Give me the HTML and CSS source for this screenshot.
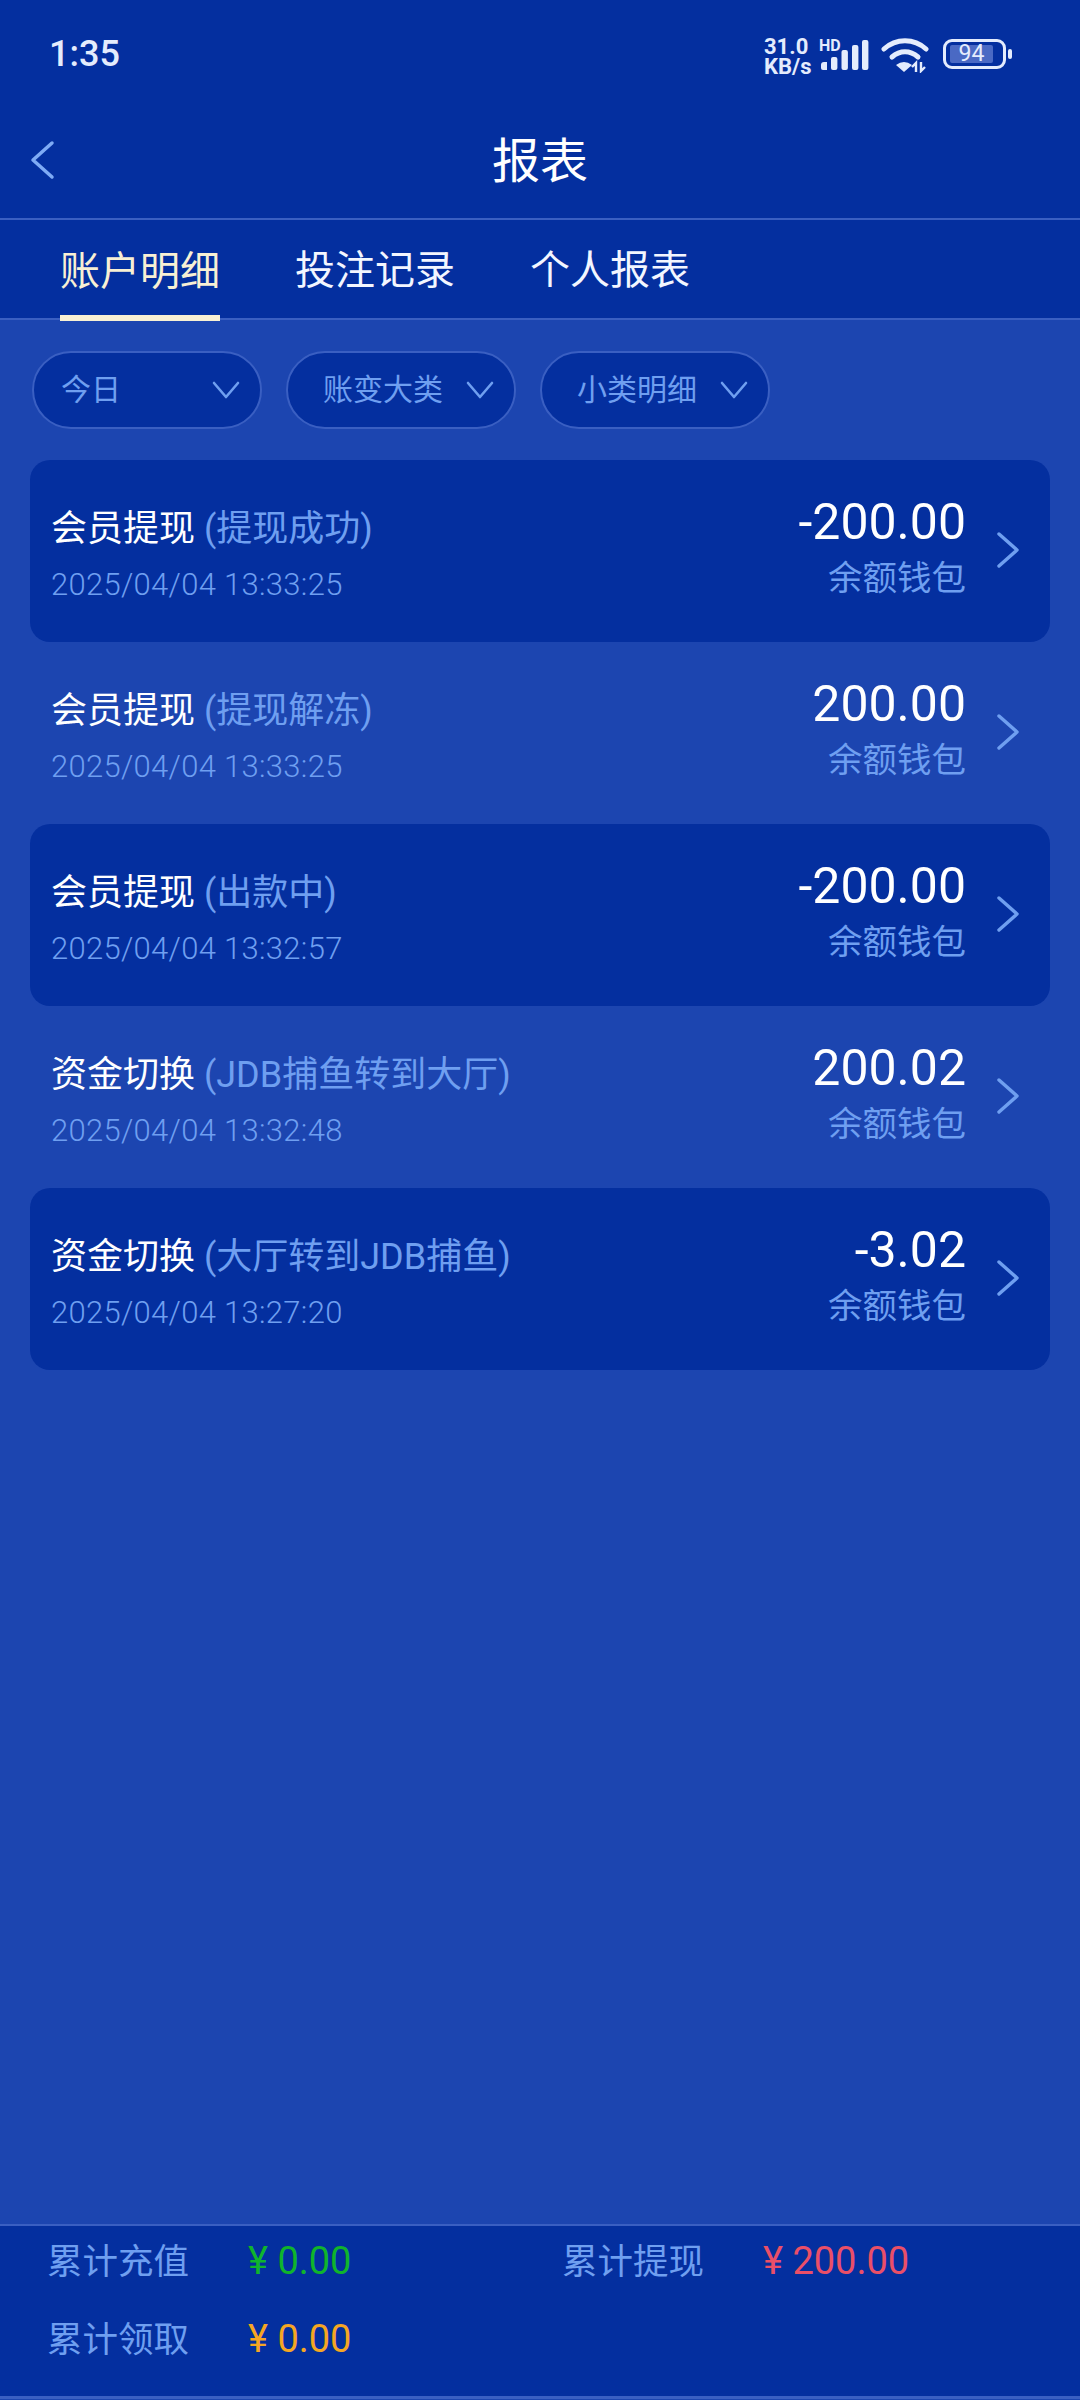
FILE: index.html
```html
<!DOCTYPE html>
<html lang="zh-CN">
<head>
    <meta charset="UTF-8" />
    <meta name="viewport" content="width=device-width, initial-scale=1.0"/>
    <title>报表</title>
    <link rel="stylesheet" href="styles.css">
</head>
<body>

<div class="page">

    <!-- Barra di stato -->
    <div class="status-bar">
        <span class="status-time">1:35</span>
        <div class="status-icons">
            <div class="net-speed"><span>31.0</span><span>KB/s</span></div>
            <div class="signal">
                <span class="hd-text">HD</span>
                <svg width="50" height="34" viewBox="0 0 50 34">
                    <path d="M2 27a3 3 0 0 1 3-3h3v8H4a2 2 0 0 1-2-2z" fill="#e4ecfd"/>
                    <rect x="12" y="19" width="6.4" height="13" rx="2" fill="#e4ecfd"/>
                    <rect x="22.5" y="12" width="6.4" height="20" rx="2" fill="#e4ecfd"/>
                    <rect x="33" y="7" width="6.4" height="25" rx="2" fill="#e4ecfd"/>
                    <rect x="43" y="2" width="6.4" height="30" rx="2" fill="#e4ecfd"/>
                </svg>
            </div>
            <svg class="wifi" width="48" height="36" viewBox="0 0 48 36">
                <path d="M3 12C15 1 33 1 45 12" fill="none" stroke="#e4ecfd" stroke-width="5" stroke-linecap="round"/>
                <path d="M11 20c8-7 18-7 26 0" fill="none" stroke="#e4ecfd" stroke-width="5" stroke-linecap="round"/>
                <path d="M15 28q8-6 16 0l-8 7z" fill="#e4ecfd"/>
                <path d="M35 35v-9l-4 4M40 25v9l4-4" fill="none" stroke="#e4ecfd" stroke-width="2.4"/>
            </svg>
            <div class="battery">
                <div class="battery-body"><span class="battery-level">94</span></div>
                <div class="battery-nub"></div>
            </div>
        </div>
    </div>

    <!-- Intestazione -->
    <div class="nav-bar">
        <svg class="back" width="26" height="40" viewBox="0 0 26 40">
            <path d="M23 3L4 20l19 17" fill="none" stroke="#7fabf5" stroke-width="3.5" stroke-linecap="round" stroke-linejoin="round"/>
        </svg>
        <h1>报表</h1>
    </div>

    <div class="tabs">
        <a class="tab tab-active">账户明细</a>
        <a class="tab">投注记录</a>
        <a class="tab">个人报表</a>
    </div>

    <!-- Filtri -->
    <div class="filters">
        <div class="chip chip-short">
            <span>今日</span>
            <svg width="28" height="18" viewBox="0 0 28 18"><path d="M2 2l12 14L26 2" fill="none" stroke="#6f9ff0" stroke-width="2.6" stroke-linecap="round" stroke-linejoin="round"/></svg>
        </div>
        <div class="chip">
            <span>账变大类</span>
            <svg width="28" height="18" viewBox="0 0 28 18"><path d="M2 2l12 14L26 2" fill="none" stroke="#6f9ff0" stroke-width="2.6" stroke-linecap="round" stroke-linejoin="round"/></svg>
        </div>
        <div class="chip">
            <span>小类明细</span>
            <svg width="28" height="18" viewBox="0 0 28 18"><path d="M2 2l12 14L26 2" fill="none" stroke="#6f9ff0" stroke-width="2.6" stroke-linecap="round" stroke-linejoin="round"/></svg>
        </div>
    </div>

    <!-- Elenco movimenti -->
    <div class="records">
        <div class="record record-dark">
            <div class="record-left">
                <div class="record-title">会员提现 <span>(提现成功)</span></div>
                <div class="record-date">2025/04/04 13:33:25</div>
            </div>
            <div class="record-right">
                <div class="record-amount">-200.00</div>
                <div class="record-wallet">余额钱包</div>
            </div>
            <svg class="record-arrow" width="24" height="38" viewBox="0 0 24 38"><path d="M3 3l18 16L3 35" fill="none" stroke="#6f9ff0" stroke-width="3.4" stroke-linecap="round" stroke-linejoin="round"/></svg>
        </div>
        <div class="record">
            <div class="record-left">
                <div class="record-title">会员提现 <span>(提现解冻)</span></div>
                <div class="record-date">2025/04/04 13:33:25</div>
            </div>
            <div class="record-right">
                <div class="record-amount">200.00</div>
                <div class="record-wallet">余额钱包</div>
            </div>
            <svg class="record-arrow" width="24" height="38" viewBox="0 0 24 38"><path d="M3 3l18 16L3 35" fill="none" stroke="#6f9ff0" stroke-width="3.4" stroke-linecap="round" stroke-linejoin="round"/></svg>
        </div>
        <div class="record record-dark">
            <div class="record-left">
                <div class="record-title">会员提现 <span>(出款中)</span></div>
                <div class="record-date">2025/04/04 13:32:57</div>
            </div>
            <div class="record-right">
                <div class="record-amount">-200.00</div>
                <div class="record-wallet">余额钱包</div>
            </div>
            <svg class="record-arrow" width="24" height="38" viewBox="0 0 24 38"><path d="M3 3l18 16L3 35" fill="none" stroke="#6f9ff0" stroke-width="3.4" stroke-linecap="round" stroke-linejoin="round"/></svg>
        </div>
        <div class="record">
            <div class="record-left">
                <div class="record-title">资金切换 <span>(JDB捕鱼转到大厅)</span></div>
                <div class="record-date">2025/04/04 13:32:48</div>
            </div>
            <div class="record-right">
                <div class="record-amount">200.02</div>
                <div class="record-wallet">余额钱包</div>
            </div>
            <svg class="record-arrow" width="24" height="38" viewBox="0 0 24 38"><path d="M3 3l18 16L3 35" fill="none" stroke="#6f9ff0" stroke-width="3.4" stroke-linecap="round" stroke-linejoin="round"/></svg>
        </div>
        <div class="record record-dark">
            <div class="record-left">
                <div class="record-title">资金切换 <span>(大厅转到JDB捕鱼)</span></div>
                <div class="record-date">2025/04/04 13:27:20</div>
            </div>
            <div class="record-right">
                <div class="record-amount">-3.02</div>
                <div class="record-wallet">余额钱包</div>
            </div>
            <svg class="record-arrow" width="24" height="38" viewBox="0 0 24 38"><path d="M3 3l18 16L3 35" fill="none" stroke="#6f9ff0" stroke-width="3.4" stroke-linecap="round" stroke-linejoin="round"/></svg>
        </div>
    </div>

    <!-- Totali -->
    <div class="summary">
        <div class="summary-item"><span class="summary-label">累计充值</span><span class="summary-value value-green">¥ 0.00</span></div>
        <div class="summary-item"><span class="summary-label">累计提现</span><span class="summary-value value-red">¥ 200.00</span></div>
        <div class="summary-item"><span class="summary-label">累计领取</span><span class="summary-value value-orange">¥ 0.00</span></div>
    </div>

</div>

</body>
</html>
```
FILE: styles.css
```css
body {
    margin: 0;
    padding: 0;
    background: #1c45b0;
    font-family: Roboto, 'Noto Sans CJK SC', sans-serif;
    color: #fff;
}

.page {
    width: 1080px;
    height: 2400px;
    display: flex;
    flex-direction: column;
    overflow: hidden;
}

/* status bar */
.status-bar {
    height: 100px;
    background: #042f9f;
    display: flex;
    justify-content: space-between;
    align-items: flex-start;
    box-sizing: border-box;
    padding: 32px 68px 0 49px;
}

.status-time {
    font-size: 36px;
    line-height: 44px;
    font-weight: 500;
    color: #e4ecfd;
}

.status-icons {
    display: flex;
    align-items: flex-start;
    padding-top: 5px;
}

.net-speed {
    display: flex;
    flex-direction: column;
    font-size: 22px;
    line-height: 20px;
    font-weight: 700;
    color: #e4ecfd;
    width: 55px;
    white-space: nowrap;
}

.signal {
    position: relative;
    margin-top: 1px;
    height: 34px;
}

.hd-text {
    position: absolute;
    left: 0;
    top: 2px;
    font-size: 16px;
    line-height: 12px;
    font-weight: 700;
    color: #e4ecfd;
}

.wifi {
    margin-left: 12px;
}

.battery {
    display: flex;
    align-items: center;
    margin-left: 14px;
    margin-top: 2px;
}

.battery-body {
    width: 63px;
    height: 30px;
    box-sizing: border-box;
    border: 3px solid #e4ecfd;
    border-radius: 9px;
    padding: 3px 10px 3px 4px;
    display: flex;
}

.battery-level {
    flex: 1;
    background: #4a69c4;
    border-radius: 2px;
    font-size: 23px;
    line-height: 18px;
    text-align: center;
    color: #e4ecfd;
}

.battery-nub {
    width: 4px;
    height: 10px;
    margin-left: 2px;
    border-radius: 2px;
    background: #e4ecfd;
}

/* nav */
.nav-bar {
    height: 118px;
    background: #042f9f;
    border-bottom: 2px solid #3a5fc2;
    box-sizing: content-box;
    display: flex;
    align-items: center;
    justify-content: center;
}

.back {
    margin-left: 29px;
    margin-right: auto;
    margin-top: 1px;
}

.nav-bar h1 {
    margin: 5px auto 0 -55px;
    font-size: 48px;
    line-height: 60px;
    font-weight: 400;
    color: #fff;
}

.tabs {
    height: 98px;
    background: #042f9f;
    border-bottom: 2px solid #3a5fc2;
    display: flex;
    gap: 75px;
    padding-left: 60px;
}

.tab {
    width: 160px;
    height: 100px;
    box-sizing: border-box;
    font-size: 40px;
    line-height: 102px;
    text-align: center;
    color: #f3f6ff;
}

.tab-active {
    color: #f8f0d4;
    border-bottom: 6px solid #f8f0d4;
    margin-top: 1px;
}

/* filters */
.filters {
    display: flex;
    gap: 24px;
    padding: 31px 0 0 32px;
}

.chip {
    width: 230px;
    height: 78px;
    box-sizing: border-box;
    background: #042f9f;
    border: 2px solid #3a5fc2;
    border-radius: 39px;
    display: flex;
    align-items: center;
    justify-content: space-between;
    padding: 0 20px 0 35px;
    font-size: 30px;
    line-height: 70px;
    color: #6f9ff0;
}

.chip-short {
    padding-left: 27px;
}

/* records */
.records {
    padding: 31px 30px 0 30px;
    flex: 1;
}

.record {
    height: 182px;
    box-sizing: border-box;
    border-radius: 20px;
    display: flex;
    align-items: flex-start;
    padding: 41px 30px 0 21px;
}

.record-dark {
    background: #042f9f;
}

.record-left {
    flex: 1;
}

.record-title {
    font-size: 36px;
    line-height: 56px;
    color: #fff;
}

.record-title span {
    color: #6f9ff0;
}

.record-date {
    font-size: 31px;
    line-height: 56px;
    font-weight: 300;
    letter-spacing: 0.3px;
    color: #6f9ff0;
}

.record-right {
    text-align: right;
    margin-right: 30px;
    margin-top: -7px;
}

.record-amount {
    font-size: 50px;
    line-height: 56px;
    color: #fff;
}

.record-wallet {
    font-size: 34.5px;
    line-height: 56px;
    color: #6f9ff0;
}

.record-arrow {
    align-self: center;
    margin-top: -43px;
}

/* summary */
.summary {
    height: 175px;
    box-sizing: border-box;
    background: #042f9f;
    border-top: 2px solid #3a5fc2;
    border-bottom: 3px solid #3a5fc2;
    margin-bottom: 1px;
    display: grid;
    grid-template-columns: 515px 517px;
    grid-auto-rows: 68px;
    row-gap: 10px;
    padding: 0 0 0 47px;
}

.summary-item {
    display: flex;
    align-items: center;
}

.summary-label {
    width: 201px;
    font-size: 35.5px;
    margin-top: -3px;
    color: #6f9ff0;
}

.summary-value {
    font-size: 38px;
    margin-top: 2px;
    font-weight: 400;
}

.value-green {
    color: #10b42c;
}

.value-red {
    color: #ea4f68;
}

.value-orange {
    color: #f5a623;
}
```
